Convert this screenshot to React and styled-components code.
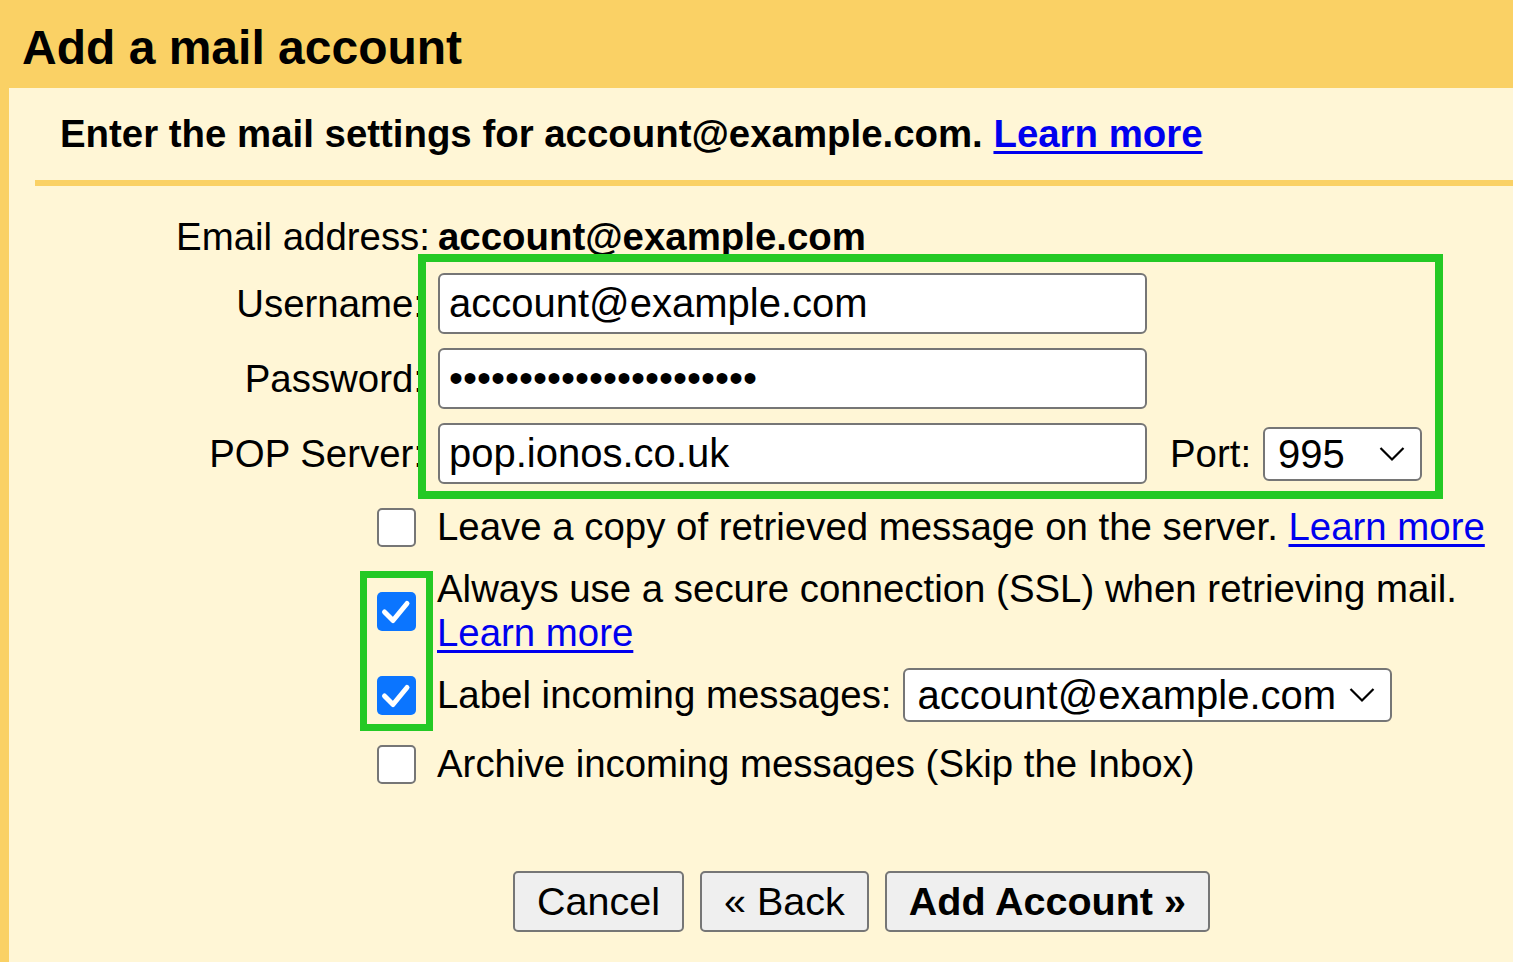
import React from "react";
import styled, { createGlobalStyle } from "styled-components";

const Global = createGlobalStyle`
  html, body { margin: 0; padding: 0; }
  body {
    background: #fad165;
    font-family: "Liberation Sans", Arial, sans-serif;
    color: #000;
    width: 1513px;
    height: 962px;
    overflow: hidden;
  }
  * { box-sizing: border-box; }
`;

const Page = styled.div`
  position: relative;
  width: 1513px;
  height: 962px;
  display: flex;
  flex-direction: column;
  background: #fad165;
`;

const Header = styled.header`
  height: 88px;
  padding: 20px 0 0 22px;
  flex: none;
`;

const Title = styled.h1`
  margin: 0;
  font-size: 48px;
  line-height: 56px;
  font-weight: 700;
`;

const Panel = styled.main`
  flex: 1;
  margin-left: 9px;
  background: #fff6d6;
  display: flex;
  flex-direction: column;
`;

const Intro = styled.p`
  margin: 24px 0 24px 51px;
  font-size: 38.4px;
  line-height: 44px;
  font-weight: 700;
`;

const Link = styled.a`
  color: #0000ee;
  text-decoration: underline;
  text-underline-offset: 4px;
  cursor: pointer;
`;

const Divider = styled.hr`
  margin: 0 0 0 26px;
  border: 0;
  height: 6px;
  background: #fad165;
`;

const FormGrid = styled.div`
  margin-top: 29px;
  display: grid;
  grid-template-columns: 415px 1fr;
  column-gap: 14px;
  row-gap: 14px;
  align-items: center;
  font-size: 38.4px;
  line-height: 44px;
`;

const Label = styled.div`
  text-align: right;
  white-space: nowrap;
  margin-right: ${(p) => p.$shift || 0}px;
`;

const Value = styled.div`
  display: flex;
  align-items: center;
  font-weight: ${(p) => (p.$bold ? 700 : 400)};
`;

const TextBox = styled.input`
  width: 709px;
  height: 61px;
  border: 2px solid #767676;
  border-radius: 6px;
  background: #fff;
  padding: 0 0 0 9px;
  font-family: "Liberation Sans", Arial, sans-serif;
  font-size: 40px;
  color: #000;
  outline: none;
`;

const PortLabel = styled.span`
  margin-left: 23px;
  margin-right: 12px;
`;

const SelectBox = styled.div`
  width: ${(p) => p.$width}px;
  height: 54px;
  margin-left: ${(p) => p.$gap || 0}px;
  border: 2px solid #767676;
  border-radius: 6px;
  background: #fff;
  display: flex;
  align-items: center;
  justify-content: space-between;
  padding: 0 15px 0 13px;
  font-size: 40px;
  line-height: 44px;
  flex: none;
`;

const Options = styled.div`
  margin-top: 21px;
  padding-left: 368px;
  display: flex;
  flex-direction: column;
  font-size: 38.4px;
  line-height: 44px;
`;

const OptionRow = styled.div`
  display: flex;
  align-items: center;
  gap: 21px;
  margin-top: ${(p) => p.$top || 0}px;
`;

const Box = styled.span`
  width: 39px;
  height: 39px;
  flex: none;
  border-radius: 5px;
  border: ${(p) => (p.$checked ? "none" : "2px solid #767676")};
  background: ${(p) => (p.$checked ? "#0b75ff" : "#fff")};
  display: flex;
  align-items: center;
  justify-content: center;
`;

const OptionText = styled.div`
  display: flex;
  align-items: center;
  flex-wrap: wrap;
`;

const Buttons = styled.div`
  margin-top: 85px;
  padding-left: 504px;
  display: flex;
  gap: 16px;
`;

const Button = styled.button`
  height: 61px;
  padding: 0 22px;
  border: 2px solid #767676;
  border-radius: 5px;
  background: #efefef;
  font-family: "Liberation Sans", Arial, sans-serif;
  font-size: 39.5px;
  font-weight: ${(p) => (p.$primary ? 700 : 400)};
  color: #000;
  cursor: pointer;
`;

const Highlight = styled.div`
  position: absolute;
  left: ${(p) => p.$x}px;
  top: ${(p) => p.$y}px;
  width: ${(p) => p.$w}px;
  height: ${(p) => p.$h}px;
  border: ${(p) => p.$t}px solid #24c925;
  pointer-events: none;
`;

const Chevron = () => (
  <svg width="26" height="16" viewBox="0 0 26 16" fill="none">
    <path d="M1.5 2 L13 13.5 L24.5 2" stroke="#000" strokeWidth="2.2" />
  </svg>
);

const Check = ({ checked }) => (
  <Box $checked={checked}>
    {checked && (
      <svg width="39" height="39" viewBox="0 0 39 39" fill="none">
        <path
          d="M7.5 20 L16 28.5 L30 11.5"
          stroke="#fff"
          strokeWidth="5"
          strokeLinecap="round"
          strokeLinejoin="round"
        />
      </svg>
    )}
  </Box>
);

export default function App() {
  return (
    <>
      <Global />
      <Page>
        <Header>
          <Title>Add a mail account</Title>
        </Header>
        <Panel>
          <Intro>
            Enter the mail settings for account@example.com. <Link>Learn more</Link>
          </Intro>
          <Divider />
          <FormGrid>
            <Label $shift={-6}>Email address:</Label>
            <Value $bold>account@example.com</Value>

            <Label>Username:</Label>
            <Value>
              <TextBox readOnly defaultValue="account@example.com" />
            </Value>

            <Label>Password:</Label>
            <Value>
              <TextBox readOnly defaultValue={"\u2022".repeat(22)} />
            </Value>

            <Label>POP Server:</Label>
            <Value>
              <TextBox readOnly defaultValue="pop.ionos.co.uk" />
              <PortLabel>Port:</PortLabel>
              <SelectBox $width={159}>
                <span>995</span>
                <Chevron />
              </SelectBox>
            </Value>
          </FormGrid>

          <Options>
            <OptionRow>
              <Check />
              <OptionText>
                Leave a copy of retrieved message on the server.&nbsp;<Link>Learn more</Link>
              </OptionText>
            </OptionRow>
            <OptionRow $top={18}>
              <Check checked />
              <div>
                Always use a secure connection (SSL) when retrieving mail.
                <br />
                <Link>Learn more</Link>
              </div>
            </OptionRow>
            <OptionRow $top={13}>
              <Check checked />
              <OptionText>
                Label incoming messages:
                <SelectBox $width={489} $gap={11}>
                  <span>account@example.com</span>
                  <Chevron />
                </SelectBox>
              </OptionText>
            </OptionRow>
            <OptionRow $top={20}>
              <Check />
              <OptionText>Archive incoming messages (Skip the Inbox)</OptionText>
            </OptionRow>
          </Options>

          <Buttons>
            <Button>Cancel</Button>
            <Button>« Back</Button>
            <Button $primary>Add Account »</Button>
          </Buttons>
        </Panel>

        <Highlight $x={418} $y={254} $w={1025} $h={245} $t={8} />
        <Highlight $x={360} $y={571} $w={73} $h={160} $t={7} />
      </Page>
    </>
  );
}
